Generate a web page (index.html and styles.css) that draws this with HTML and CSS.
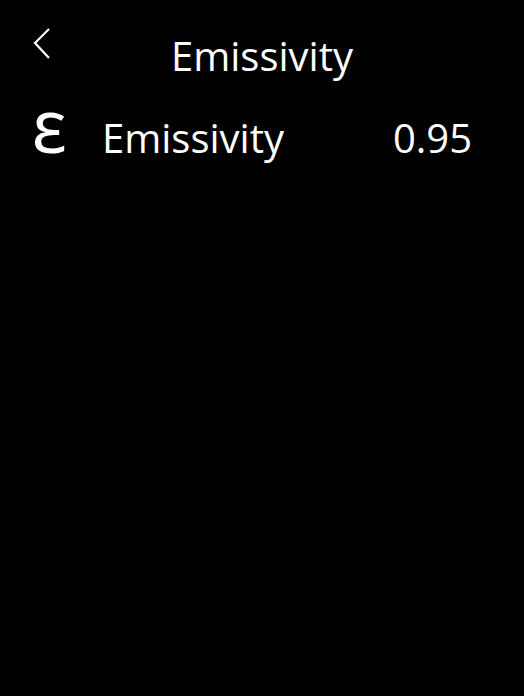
FILE: index.html
```html
<!DOCTYPE html>
<html>
<head>
<meta charset="utf-8">
<link rel="stylesheet" href="styles.css">
</head>
<body>
<div class="screen">
  <header class="header">
    <svg class="back" width="18" height="32" viewBox="0 0 18 32"><path d="M16 1 L2 15 L16 30" fill="none" stroke="#fff" stroke-width="2.2"/></svg>
    <h1 class="title">Emissivity</h1>
  </header>
  <div class="row">
    <span class="icon">Ɛ</span>
    <span class="label">Emissivity</span>
    <span class="value">0.95</span>
  </div>
</div>
</body>
</html>
```
FILE: styles.css
```css
html, body {
  margin: 0;
  padding: 0;
  background: #000;
}
.screen {
  width: 524px;
  height: 696px;
  background: #000;
  color: #fff;
  font-family: "Open Sans", "Noto Sans", sans-serif;
  position: relative;
}
.header {
  position: relative;
  height: 99px;
  display: flex;
  justify-content: center;
}
.back {
  position: absolute;
  left: 33px;
  top: 28px;
}
.title {
  margin: 0;
  padding-top: 28px;
  font-size: 40px;
  font-weight: 400;
  line-height: 56px;
}
.row {
  display: flex;
  align-items: baseline;
  padding: 0 52px 0 32px;
}
.icon {
  font-size: 57px;
  width: 70px;
  line-height: 64px;
  font-weight: 500;
}
.label {
  font-size: 40px;
  flex: 1;
}
.value {
  font-size: 40px;
}
```
